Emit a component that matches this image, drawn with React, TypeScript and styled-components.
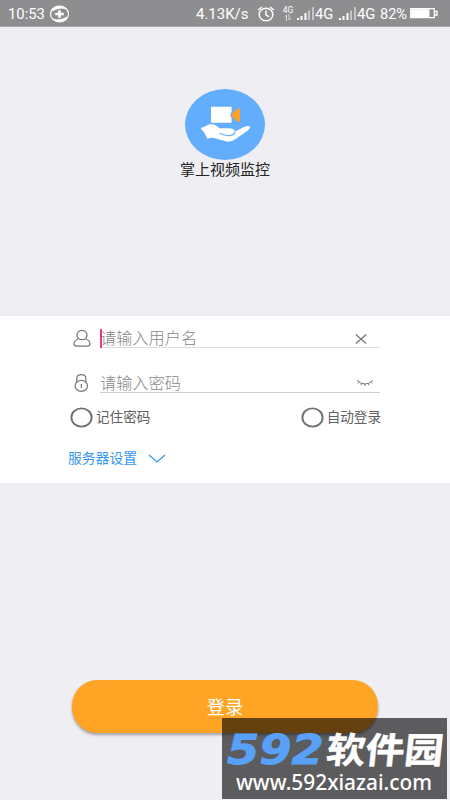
import React from "react";
import styled, { createGlobalStyle } from "styled-components";

const GlobalStyle = createGlobalStyle`
  * { box-sizing: border-box; }
  body { margin: 0; background: #eeeef3; }
`;

const Screen = styled.main`
  position: relative;
  display: flex;
  flex-direction: column;
  width: 450px;
  height: 800px;
  overflow: hidden;
  background: #eeeef3;
  font-family: Roboto, "Noto Sans CJK SC", sans-serif;
`;

const StatusBar = styled.header`
  display: flex;
  align-items: center;
  flex: none;
  height: 27px;
  padding: 1px 0 0 8px;
  background: #8e8e90;
  border-bottom: 1px solid #a5a5a8;
  color: #fff;
  font-size: 14px;
  line-height: 26px;
`;

const StatusText = styled.span<{ $width: number; $stretch?: number; $gap?: number }>`
  flex: none;
  width: ${(p) => p.$width}px;
  margin-left: ${(p) => p.$gap ?? 0}px;
  white-space: nowrap;
  transform: scaleX(${(p) => p.$stretch ?? 1});
  transform-origin: left center;
`;

const StatusIcon = styled.svg<{ $gap?: number }>`
  flex: none;
  display: block;
  margin-left: ${(p) => p.$gap ?? 0}px;
`;

const NetworkType = styled.span`
  display: flex;
  flex-direction: column;
  align-items: center;
  flex: none;
  width: 12px;
  margin-left: 7px;
  font-size: 8.5px;
  line-height: 8px;
`;

const Brand = styled.section`
  display: flex;
  flex-direction: column;
  align-items: center;
  flex: none;
  height: 289px;
  padding-top: 62px;
`;

const BrandName = styled.h1`
  margin: 0;
  color: #222;
  font-size: 15px;
  font-weight: 400;
  line-height: 20px;
`;

const Form = styled.form`
  flex: none;
  height: 167px;
  padding: 10px 70px 0 68px;
  background: #fff;
`;

const Field = styled.div<{ $height: number }>`
  display: grid;
  grid-template: 100% / 32px 280px;
  height: ${(p) => p.$height}px;
`;

const FieldIcon = styled.div`
  display: flex;
  align-items: flex-end;
  padding-left: 5px;
`;

const FieldBody = styled.div<{ $line: string }>`
  display: flex;
  align-items: flex-end;
  justify-content: space-between;
  border-bottom: 1px solid ${(p) => p.$line};
`;

const InputText = styled.div`
  position: relative;
  color: #888;
  font-size: 16.2px;
  font-weight: 300;
  line-height: 16px;
`;

const Cursor = styled.i`
  position: absolute;
  left: 0;
  top: -2px;
  width: 2px;
  height: 19px;
  background: #ec3a79;
`;

const FieldAction = styled.svg<{ $right: number; $bottom: number }>`
  flex: none;
  margin: 0 ${(p) => p.$right}px ${(p) => p.$bottom}px 0;
`;

const Options = styled.div`
  display: flex;
  justify-content: space-between;
  height: 22px;
  margin: 13px -1px 0 2px;
`;

const Option = styled.label`
  display: flex;
  align-items: center;
  gap: 3px;
  color: #606060;
  font-size: 13.6px;
  line-height: 20px;
`;

const ServerSettings = styled.div`
  display: flex;
  align-items: center;
  gap: 11px;
  height: 22px;
  margin-top: 19px;
  color: #3898ea;
  font-size: 13.8px;
  line-height: 22px;
`;

const LoginButton = styled.button`
  flex: none;
  width: 306px;
  height: 53px;
  margin: 197px 0 0 72px;
  padding: 0;
  border: 0;
  border-radius: 25px / 26px;
  background: #ffa425;
  box-shadow: 0 2px 3px rgba(0, 0, 0, 0.32);
  color: #fff;
  font: 400 18.3px/53px "Noto Sans CJK SC", sans-serif;
`;

const Watermark = styled.aside`
  position: absolute;
  left: 222px;
  top: 718px;
  width: 225px;
  height: 81px;
  padding: 13px 0 0 5px;
  background: rgba(0, 0, 0, 0.61);
  color: #fff;
`;

const WatermarkTitle = styled.div`
  display: flex;
  align-items: center;
  height: 38px;
`;

const Digits = styled.span`
  flex: none;
  width: 100px;
  color: #58a0f8;
  font: italic 700 40px/38px "DejaVu Sans", sans-serif;
  -webkit-text-stroke: 0.8px #58a0f8;
  transform: scaleX(1.16);
  transform-origin: left center;
`;

const SiteName = styled.span`
  flex: none;
  margin-top: -5px;
  font: 700 39px/38px "Noto Sans CJK SC", sans-serif;
  -webkit-text-stroke: 0.6px #fff;
  transform: skewX(-6deg) scaleY(0.91);
`;

const SiteAddress = styled.div`
  width: max-content;
  margin-left: 9px;
  font: 500 22.5px/26px "Noto Sans", sans-serif;
  white-space: nowrap;
  transform: scaleX(0.927);
  transform-origin: left center;
`;

const Signal = ({ gap }: { gap: number }) => (
  <StatusIcon $gap={gap} width="18" height="14" viewBox="0 0 18 14">
    <g fill="#fff">
      <path d="M0 11h2v2H0zM3.5 9h2v4h-2zM7.5 6h2v7h-2z" />
      <path d="M11 3.5h2V13h-2zM15 0h2v13h-2z" opacity=".5" />
    </g>
  </StatusIcon>
);

const Radio = () => (
  <svg width="23" height="21" viewBox="0 0 23 21" fill="none" stroke="#717171" strokeWidth="1.9">
    <ellipse cx="11.5" cy="10.5" rx="10.1" ry="9.1" />
  </svg>
);

export default function App() {
  return (
    <Screen>
      <GlobalStyle />
      <StatusBar>
        <StatusText $width={37} $stretch={1.06}>10:53</StatusText>
        <StatusIcon $gap={4} width="21" height="18" viewBox="0 0 21 18">
          <ellipse cx="10.5" cy="9" rx="9" ry="7.8" fill="none" stroke="#fff" strokeWidth="1.2" />
          <path d="M3 4Q9-1 17 4Q10 1.8 3.5 6ZM18 14Q12 19 4 14Q11 16.2 17.5 12Z" fill="#fff" stroke="#fff" strokeWidth=".6" />
          <path d="M10.5 5.2v7.6M6.2 9h8.6" stroke="#fff" strokeWidth="2.6" />
        </StatusIcon>
        <StatusText $gap={126} $width={54} $stretch={1.07}>4.13K/s</StatusText>
        <StatusIcon $gap={7} width="18" height="16" viewBox="0 0 18 16" fill="none" stroke="#fff" strokeWidth="1.5">
          <ellipse cx="9" cy="8.5" rx="6.8" ry="6.3" />
          <path d="M9 4.5v4.3l3 2M1 4l4-3M17 4l-4-3" />
        </StatusIcon>
        <NetworkType>
          <span>4G</span>
          <svg width="8" height="7" viewBox="0 0 8 7" fill="none" stroke="#d5d5d6" strokeWidth="1">
            <path d="M2.5 7V1L.8 3M5 0v6L7 4" />
          </svg>
        </NetworkType>
        <Signal gap={3} />
        <StatusText $width={20} $stretch={1.06}>4G</StatusText>
        <Signal gap={4} />
        <StatusText $width={20} $stretch={1.06}>4G</StatusText>
        <StatusText $gap={3} $width={28} $stretch={1.04}>82%</StatusText>
        <StatusIcon $gap={2} width="28" height="11" viewBox="0 0 28 11">
          <path d="M.7 .7h23.6v9H.7zM25 3.5h2v3.5h-2" fill="none" stroke="#fff" strokeWidth="1.3" />
          <path d="M1.2 1.2h18.3v8H1.2z" fill="#fff" />
        </StatusIcon>
      </StatusBar>

      <Brand>
        <svg width="80" height="71" viewBox="0 0 80 71">
          <ellipse cx="40" cy="35.5" rx="40" ry="35.5" fill="#62adfc" />
          <path d="M26 17.8h20.6v5L45 26l1.6 3.5v4.3H26z" fill="#fff" />
          <path d="M55 19v14.2Q50.5 32.3 45.8 26Q50.5 19.8 55 19Z" fill="#f9a32e" />
          <path
            d="M15.5 39Q20 38 23.3 35.6Q28 34.8 31 36.6L34.5 39.2H44Q48.8 39.2 50 42.4L57 39Q62 35.8 65.3 37.7Q65 40 60 43.5L51 49.8Q46.5 53.2 41.5 52.6L30 49.2Q26 48.2 22.5 50Q20.5 44 15.5 39Z"
            fill="#fff"
          />
          <path
            d="M50 42.6Q50 46.4 44.5 46.6Q40 46.8 34.5 44.2"
            fill="none"
            stroke="#62adfc"
            strokeWidth="1.2"
          />
        </svg>
        <BrandName>掌上视频监控</BrandName>
      </Brand>

      <Form>
        <Field $height={22}>
          <FieldIcon>
            <svg width="18" height="19" viewBox="0 0 18 19" fill="none" stroke="#777" strokeWidth="1.2">
              <ellipse cx="9" cy="6" rx="5" ry="4.7" />
              <path d="M5.2 10Q1 11.5 1 14.8Q1 17.2 4 17.2H14Q17 17.2 17 14.8Q17 11.5 12.8 10" />
            </svg>
          </FieldIcon>
          <FieldBody $line="#dedede">
            <InputText>
              请输入用户名
              <Cursor />
            </InputText>
            <FieldAction $right={13} $bottom={3} width="12" height="10" viewBox="0 0 12 10" stroke="#6f6f6f" strokeWidth="1.1">
              <path d="M.8.5l10.4 9M11.2.5L.8 9.5" />
            </FieldAction>
          </FieldBody>
        </Field>
        <Field $height={45}>
          <FieldIcon>
            <svg width="18" height="20" viewBox="0 0 18 20" fill="none" stroke="#777" strokeWidth="1.2">
              <ellipse cx="8.3" cy="12.9" rx="6.2" ry="5.5" />
              <path d="M3.8 9V5.4Q3.8 1.6 8.3 1.6Q12.8 1.6 12.8 5.4V9M8.3 11v4" />
            </svg>
          </FieldIcon>
          <FieldBody $line="#cfcfcf">
            <InputText>请输入密码</InputText>
            <FieldAction $right={6} $bottom={5} width="18" height="8" viewBox="0 0 18 8" fill="none" stroke="#777" strokeWidth="1">
              <path d="M1 1.2Q4.5 5 9 5Q13.5 5 17 1.2M9 5v2M5.8 4.4l-.8 1.8M12.2 4.4l.8 1.8M3.2 3L2 4.4M14.8 3L16 4.4" />
            </FieldAction>
          </FieldBody>
        </Field>
        <Options>
          <Option><Radio />记住密码</Option>
          <Option><Radio />自动登录</Option>
        </Options>
        <ServerSettings>
          服务器设置
          <svg width="18" height="9" viewBox="0 0 18 9" fill="none" stroke="#3898ea" strokeWidth="1.3">
            <path d="M1 1l8 7 8-7" />
          </svg>
        </ServerSettings>
      </Form>

      <LoginButton type="button">登录</LoginButton>

      <Watermark>
        <WatermarkTitle>
          <Digits>592</Digits>
          <SiteName>软件园</SiteName>
        </WatermarkTitle>
        <SiteAddress>www.592xiazai.com</SiteAddress>
      </Watermark>
    </Screen>
  );
}
